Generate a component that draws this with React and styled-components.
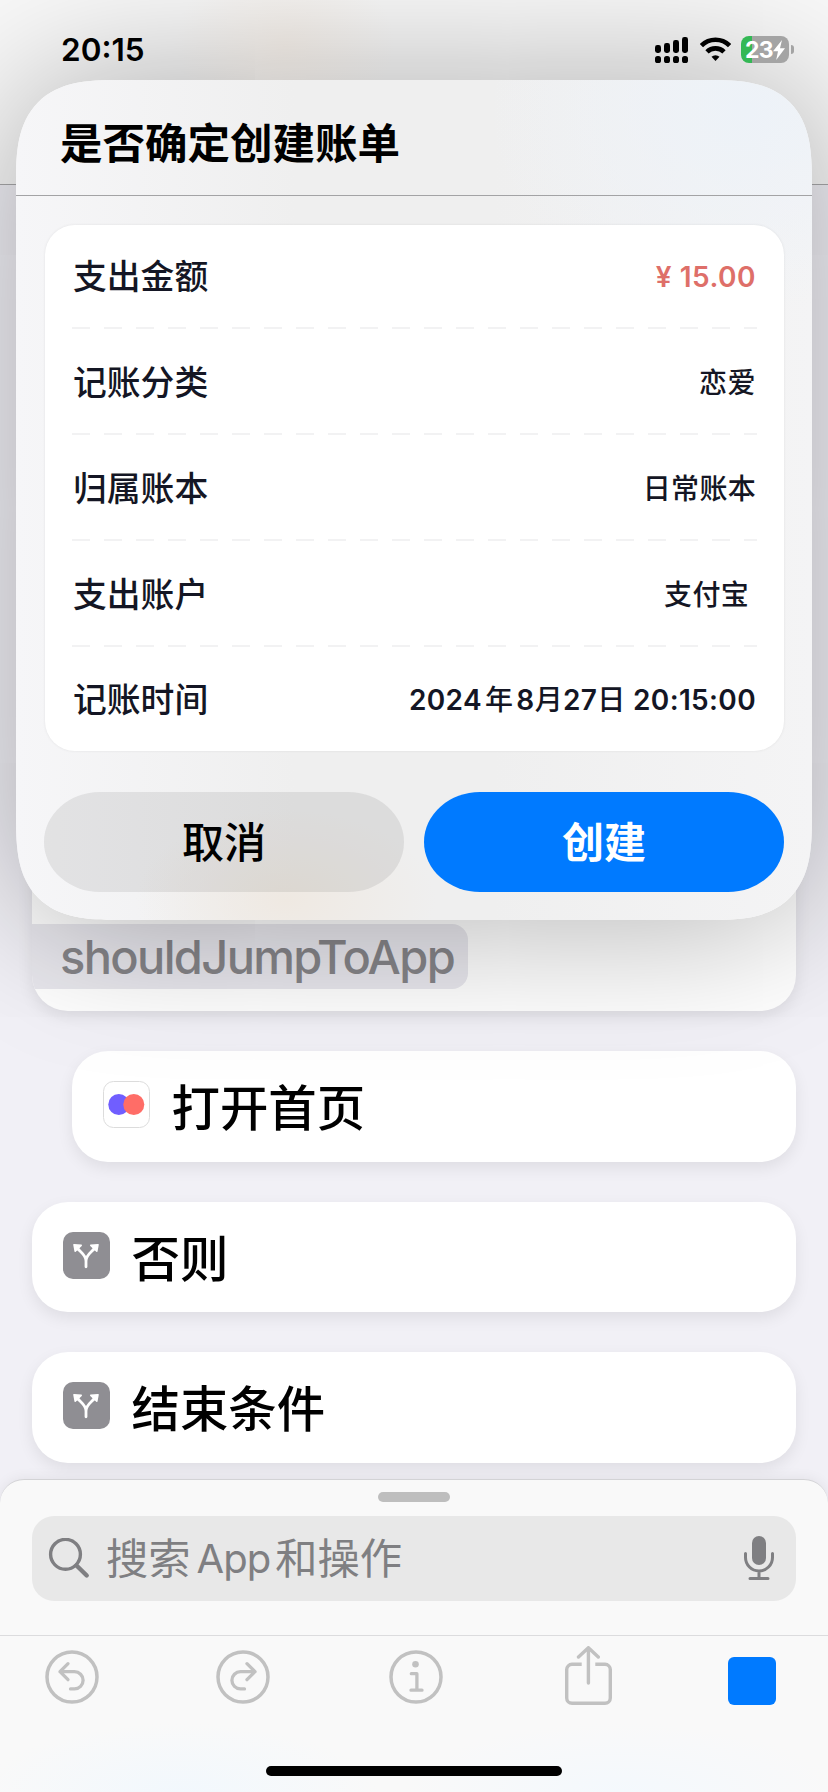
import React from "react";
import styled, { createGlobalStyle } from "styled-components";

const GlobalStyle = createGlobalStyle`
  * {
    box-sizing: border-box;
  }
  body {
    margin: 0;
    font-family: Inter, "Noto Sans CJK SC", sans-serif;
    color: #000;
  }
`;

const Screen = styled.div`
  position: relative;
  display: flex;
  flex-direction: column;
  width: 828px;
  height: 1792px;
  overflow: hidden;
  background: #f1f0f6;
`;

const NavBackdrop = styled.div`
  flex: none;
  height: 185px;
  background: #f8f8f8;
  border-bottom: 1px solid #a8a8aa;
`;

const ActionList = styled.div`
  flex: 1;
  display: flex;
  flex-direction: column;
  gap: 40px;
  padding: 40px 32px 16px;
`;

const ActionCard = styled.div`
  display: flex;
  align-items: flex-start;
  gap: 21.5px;
  height: 110.6px;
  margin-left: ${(p) => (p.$nested ? 40 : 0)}px;
  padding: 30px 0 0 31px;
  border-radius: 36px;
  background: #fff;
  box-shadow: 0 6px 16px rgba(0, 0, 0, 0.08);
`;

const ConditionCard = styled(ActionCard)`
  align-items: flex-end;
  height: 786px;
  padding: 0 0 22px;
  overflow: hidden;
`;

const VariableChip = styled.div`
  width: 436px;
  height: 65px;
  padding-left: 28px;
  border-radius: 0 16px 16px 0;
  background: #e9e8ee;
  color: #868589;
  font-size: 47px;
  font-weight: 500;
  line-height: 66px;
  letter-spacing: -1.65px;
`;

const ActionTitle = styled.div`
  font-size: 48.4px;
  font-weight: 500;
  line-height: 60px;
  margin-top: -2px;
`;

const Sheet = styled.div`
  flex: none;
  display: flex;
  flex-direction: column;
  align-items: center;
  height: 313px;
  border-top: 1px solid #d3d3d6;
  border-radius: 24px 24px 0 0;
  background: radial-gradient(ellipse 200px 70px at 180px 313px, #f2f8fd, transparent),
    radial-gradient(ellipse 220px 70px at 620px 313px, #f4f9fd, transparent), #f9f9f9;
  box-shadow: 0 0 14px rgba(0, 0, 0, 0.07);
`;

const Grabber = styled.div`
  width: 72px;
  height: 10px;
  margin-top: 12px;
  border-radius: 5px;
  background: #bebebe;
`;

const SearchField = styled.div`
  display: flex;
  align-items: center;
  width: 764px;
  height: 85px;
  margin-top: 14px;
  padding: 0 22px 0 16px;
  border-radius: 22px;
  background: #e8e8e8;
  color: #7f7f82;
`;

const Placeholder = styled.div`
  flex: 1;
  display: flex;
  gap: 5px;
  padding-left: 16px;
  font-size: 42.3px;
  font-weight: 400;
  line-height: 60px;
`;

const PlaceholderLatin = styled.span`
  padding-left: 1px;
  font-size: 40px;
  letter-spacing: -1px;
`;

const Toolbar = styled.div`
  display: grid;
  grid-template-columns: 171px 173px 176px 163px 48px;
  align-items: end;
  width: 828px;
  height: 70px;
  margin-top: 34px;
  padding-left: 45px;
  border-top: 1px solid #dcdcde;
  color: #c1c1c1;
`;

const StopButton = styled.div`
  width: 48px;
  height: 48px;
  border-radius: 6px;
  background: #007aff;
`;

const HomeIndicator = styled.div`
  width: 296px;
  height: 10px;
  margin-top: 61px;
  border-radius: 5px;
  background: #000;
`;

const Dialog = styled.div`
  position: absolute;
  top: 80px;
  left: 16px;
  width: 796px;
  height: 840px;
  border-radius: 76px;
  background: radial-gradient(ellipse 150px 90px at 270px 820px, #efe9e2, transparent),
    radial-gradient(ellipse 260px 200px at 730px 30px, #edf2f8, transparent),
    linear-gradient(90deg, #f6f6f8 0, #efefef 35%, #efefef 60%, #f4f4f5 100%);
  box-shadow: 0 4px 150px rgba(0, 0, 0, 0.33);
  @supports (corner-shape: squircle) {
    border-radius: 102px;
    corner-shape: superellipse(1.5);
  }
`;

const DialogTitle = styled.div`
  height: 116px;
  padding: 33px 0 0 44px;
  border-bottom: 1px solid #a3a3a5;
  font-size: 42.5px;
  font-weight: 600;
  line-height: 62px;
`;

const DetailCard = styled.div`
  width: 739px;
  height: 526px;
  margin: 29px 0 0 29px;
  padding: 0 27px;
  border-radius: 30px;
  background: #fff;
  box-shadow: 0 0 3px rgba(0, 0, 0, 0.08);
`;

const DetailRow = styled.div`
  display: flex;
  align-items: center;
  justify-content: space-between;
  height: 106px;
  padding: 1px 1px 0;
  color: #141624;
  background: repeating-linear-gradient(90deg, #f2f2f3 0 18px, transparent 18px 32px) bottom / 100% 2px
    no-repeat;
  &:first-child {
    height: 104px;
    padding: 0 1px 1px;
  }
  &:last-child {
    height: 104px;
    padding-top: 2px;
    background: none;
  }
`;

const DetailLabel = styled.div`
  font-size: 33.8px;
  font-weight: 500;
  line-height: 48px;
`;

const DetailValue = styled.div`
  font-size: 28px;
  font-weight: 500;
  line-height: 40px;
  letter-spacing: ${(p) => p.$spacing || 0}px;
  padding-right: ${(p) => p.$inset || 0}px;
  color: ${(p) => p.$color || "inherit"};
`;

const Digits = styled.span`
  font-weight: 600;
`;

const DateUnit = styled.span`
  padding: 0 ${(p) => p.$gap}px;
`;

const DialogButtons = styled.div`
  display: flex;
  gap: 20px;
  padding: 41px 28px 0;
`;

const DialogButton = styled.button`
  flex: 1;
  height: 100px;
  padding: 2px 0 0;
  border: 0;
  border-radius: 56px / 50px;
  background: ${(p) => (p.$primary ? "#007aff" : "rgba(60, 60, 60, 0.1)")};
  color: ${(p) => (p.$primary ? "#fff" : "#000")};
  font-family: inherit;
  font-size: 42px;
  font-weight: ${(p) => (p.$primary ? 600 : 500)};
  line-height: 60px;
`;

const StatusBar = styled.div`
  position: absolute;
  top: 0;
  left: 0;
  display: flex;
  align-items: flex-start;
  justify-content: space-between;
  width: 828px;
  height: 80px;
  padding: 36px 34px 0 61px;
  background: radial-gradient(ellipse 110px 90px at 285px 45px, rgba(226, 208, 190, 0.28), transparent);
`;

const Clock = styled.div`
  font-size: 31.5px;
  font-weight: 600;
  line-height: 28px;
`;

const StatusIcons = styled.div`
  display: flex;
  gap: 10px;
`;

const Battery = styled.div`
  display: flex;
  align-items: center;
  justify-content: center;
  width: 48px;
  height: 27px;
  border-radius: 8px;
  background: linear-gradient(90deg, #34b855 11px, #a4a4a4 11px);
  color: #fff;
  font-size: 23px;
  font-weight: 700;
  letter-spacing: -0.7px;
`;

const BatteryGroup = styled.div`
  display: flex;
  align-items: center;
  height: 27px;
  gap: 2px;
`;

const BatteryTip = styled.div`
  width: 3px;
  height: 9px;
  border-radius: 0 4px 4px 0;
  background: #a4a4a4;
`;

const SignalIcon = () => (
  <svg width="35" height="27" viewBox="0 0 35 27">
    {[9, 7, 4, 1].map((y, i) => (
      <g key={y}>
        <rect x={i * 9} y={y} width="6" height={17 - y} rx="2.4" />
        <rect x={i * 9} y="20" width="6" height="7" rx="2.6" />
      </g>
    ))}
  </svg>
);

const WifiIcon = () => (
  <svg width="31" height="27" viewBox="0 0 31 27" fill="none" stroke="#000" strokeWidth="4.6">
    <path d="M1.4 9.6a20 20 0 0 1 28.2 0" />
    <path d="M7 15.9a12 12 0 0 1 17 0" />
    <path d="M15.5 25l-4-4.2a5.8 5.8 0 0 1 8 0z" fill="#000" stroke="none" />
  </svg>
);

const BoltIcon = () => (
  <svg width="12" height="20" viewBox="0 0 12 20">
    <path d="M9 0L0 11.2h5L3.2 20 12 8.2H7z" fill="#fff" />
  </svg>
);

const AppIcon = () => (
  <svg width="47" height="47" viewBox="0 0 47 47">
    <rect x="0.5" y="0.5" width="46" height="46" rx="10" fill="#fff" stroke="#dcdcdc" />
    <circle cx="15.8" cy="23.5" r="10.5" fill="#705eff" />
    <circle cx="30.8" cy="23.5" r="10.5" fill="#ff6d67" />
  </svg>
);

const BranchIcon = () => (
  <svg width="47" height="47" viewBox="0 0 47 47">
    <rect width="47" height="47" rx="10" fill="#8f8e93" />
    <path
      d="M23 34.8V29C23 23 18 20.5 14 16M23 29C23 23 28 20.5 32 16"
      fill="none"
      stroke="#fff"
      strokeWidth="2.8"
      strokeLinecap="round"
    />
    <path
      d="M11 12.7l7.2.6-6 5.8zM35 12.7l-7.2.6 6 5.8z"
      fill="#fff"
      stroke="#fff"
      strokeWidth="1.6"
      strokeLinejoin="round"
    />
  </svg>
);

const SearchIcon = () => (
  <svg width="42" height="42" viewBox="0 0 42 42" fill="none" stroke="currentColor" strokeLinecap="round">
    <circle cx="17.5" cy="16.3" r="14.9" strokeWidth="3.4" />
    <path d="M28.5 27.5L38.7 37.5" strokeWidth="4.4" />
  </svg>
);

const MicIcon = () => (
  <svg width="30" height="45" viewBox="0 0 30 45" fill="none" stroke="currentColor" strokeLinecap="round" strokeWidth="3">
    <rect x="8" y="0" width="14" height="29" rx="7" fill="currentColor" stroke="none" />
    <path d="M1.5 17.5v4a13.5 13.5 0 0 0 27 0v-4M15 35.5v7M6 42.5h18" />
  </svg>
);

const ArrowCircleIcon = ({ flip }) => (
  <svg width="54" height="54" viewBox="0 0 54 54" fill="none" stroke="currentColor" strokeWidth="3.3" strokeLinecap="round" strokeLinejoin="round">
    <circle cx="27" cy="27" r="25" strokeWidth="3.5" />
    <path
      d="M23 13.7l-8 8 8 8M15 21.7h14.5a8.6 8.6 0 0 1 0 17.2H25.5"
      transform={flip ? "translate(54 0) scale(-1 1)" : undefined}
    />
  </svg>
);

const InfoIcon = () => (
  <svg width="54" height="54" viewBox="0 0 54 54" fill="none" stroke="currentColor" strokeWidth="3.3" strokeLinecap="round" strokeLinejoin="round">
    <circle cx="27" cy="27" r="25" strokeWidth="3.5" />
    <circle cx="26.5" cy="14.3" r="3.3" fill="currentColor" stroke="none" />
    <path d="M22.3 23.7h5.6v16.3M22 40.2h11" />
  </svg>
);

const ShareIcon = () => (
  <svg width="47" height="59" viewBox="0 0 47 59" fill="none" stroke="currentColor" strokeWidth="3.4" strokeLinejoin="round">
    <path d="M16.7 18.3H7a5.3 5.3 0 0 0-5.3 5.3V52A5.3 5.3 0 0 0 7 57.3h33a5.3 5.3 0 0 0 5.3-5.3V23.6a5.3 5.3 0 0 0-5.3-5.3h-9.7" />
    <path d="M23.4 2v35M13.5 11l9.9-9.3 9.9 9.3" strokeLinecap="round" />
  </svg>
);

const ToolbarItem = styled.div`
  display: flex;
  padding-bottom: ${(p) => p.$lift || 0}px;
`;

const details = [
  { label: "支出金额", value: <Digits>¥ 15.00</Digits>, color: "#de6f69", spacing: 0.5 },
  { label: "记账分类", value: "恋爱", spacing: 0.5 },
  { label: "归属账本", value: "日常账本", spacing: 0.3 },
  { label: "支出账户", value: "支付宝", spacing: 0.3, inset: 7 },
  {
    label: "记账时间",
    value: (
      <>
        <Digits>2024</Digits>
        <DateUnit $gap={3}>年</DateUnit>
        <Digits>8</Digits>
        <DateUnit $gap={0}>月</DateUnit>
        <Digits>27</Digits>
        <DateUnit $gap={0}>日</DateUnit>
        <Digits> 20:15:00</Digits>
      </>
    ),
    spacing: 0.35,
  },
];

const App = () => {
  return (
    <>
      <GlobalStyle />
      <Screen>
        <NavBackdrop />
        <ActionList>
          <ConditionCard>
            <VariableChip>shouldJumpToApp</VariableChip>
          </ConditionCard>
          <ActionCard $nested>
            <AppIcon />
            <ActionTitle>打开首页</ActionTitle>
          </ActionCard>
          <ActionCard>
            <BranchIcon />
            <ActionTitle>否则</ActionTitle>
          </ActionCard>
          <ActionCard>
            <BranchIcon />
            <ActionTitle>结束条件</ActionTitle>
          </ActionCard>
        </ActionList>
        <Sheet>
          <Grabber />
          <SearchField>
            <SearchIcon />
            <Placeholder>
              <span>搜索</span>
              <PlaceholderLatin>App</PlaceholderLatin>
              <span>和操作</span>
            </Placeholder>
            <MicIcon />
          </SearchField>
          <Toolbar>
            <ToolbarItem $lift={1}>
              <ArrowCircleIcon />
            </ToolbarItem>
            <ToolbarItem $lift={1}>
              <ArrowCircleIcon flip />
            </ToolbarItem>
            <ToolbarItem $lift={1}>
              <InfoIcon />
            </ToolbarItem>
            <ToolbarItem>
              <ShareIcon />
            </ToolbarItem>
            <StopButton />
          </Toolbar>
          <HomeIndicator />
        </Sheet>
        <Dialog>
          <DialogTitle>是否确定创建账单</DialogTitle>
          <DetailCard>
            {details.map((d) => (
              <DetailRow key={d.label}>
                <DetailLabel>{d.label}</DetailLabel>
                <DetailValue $color={d.color} $spacing={d.spacing} $inset={d.inset}>
                  {d.value}
                </DetailValue>
              </DetailRow>
            ))}
          </DetailCard>
          <DialogButtons>
            <DialogButton>取消</DialogButton>
            <DialogButton $primary>创建</DialogButton>
          </DialogButtons>
        </Dialog>
        <StatusBar>
          <Clock>20:15</Clock>
          <StatusIcons>
            <SignalIcon />
            <WifiIcon />
            <BatteryGroup>
              <Battery>
                23
                <BoltIcon />
              </Battery>
              <BatteryTip />
            </BatteryGroup>
          </StatusIcons>
        </StatusBar>
      </Screen>
    </>
  );
};

export default App;
